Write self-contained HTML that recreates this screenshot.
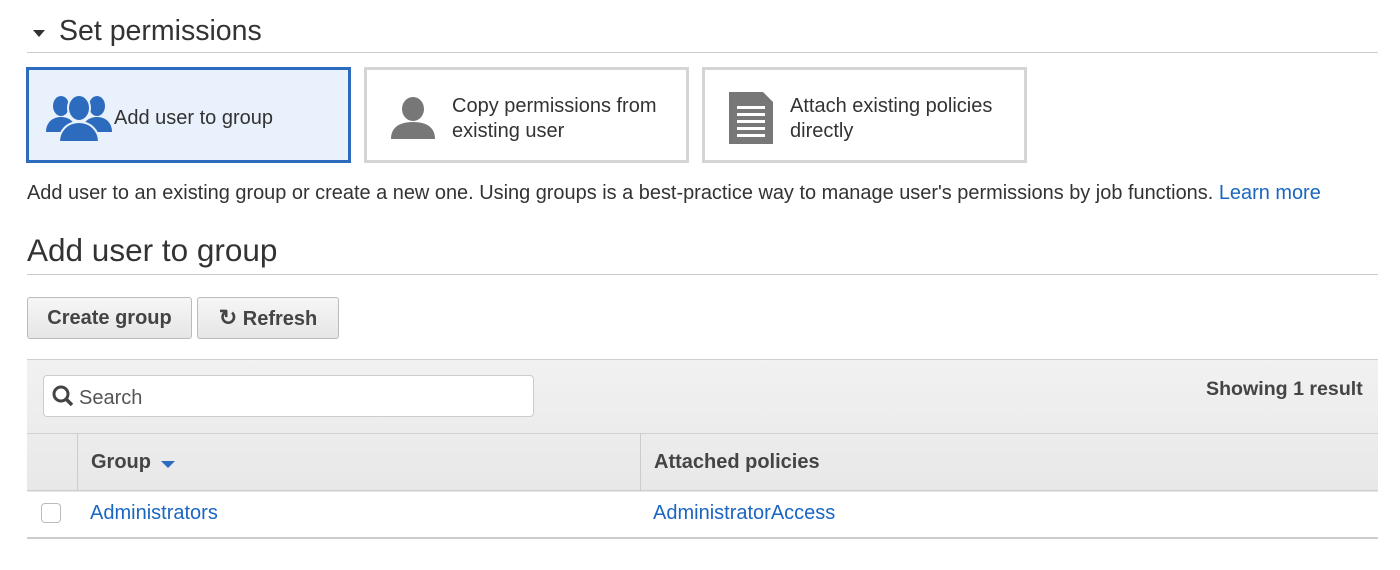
<!DOCTYPE html>
<html><head><style>
body{margin:0;width:1400px;height:570px;background:#fff;font-family:"Liberation Sans",sans-serif;color:#222;position:relative;overflow:hidden}
.a{position:absolute}
.card{position:absolute;top:67px;height:96px;border:3px solid #d5d5d5;box-sizing:border-box;background:#fff;font-size:20px;color:#333}
.btn{position:absolute;top:297px;height:42px;box-sizing:border-box;border:1px solid #bbb;border-radius:3px;background:linear-gradient(#f6f6f6,#e6e6e6);font-weight:bold;font-size:20px;color:#444;line-height:40px;text-align:center}
a{color:#1a66c2;text-decoration:none}
</style></head><body>
<div class="a" style="left:33px;top:30px;width:0;height:0;border-left:6px solid transparent;border-right:6px solid transparent;border-top:7px solid #333"></div>
<div class="a" style="left:59px;top:15px;font-size:28.5px;color:#333">Set permissions</div>
<div class="a" style="left:27px;top:52px;width:1351px;height:1px;background:#ccc"></div>

<div class="card" style="left:26px;width:325px;border-color:#2d6bbf;background:#e8f1fc">
<svg class="a" style="left:17px;top:24px" width="66" height="48" viewBox="0 0 66 48" fill="#2d6bbf">
<ellipse cx="15" cy="12" rx="8" ry="10"/><ellipse cx="51" cy="12" rx="8" ry="10"/><path d="M0 38c0-9 6-15 15-15s15 6 15 15z"/><path d="M36 38c0-9 6-15 15-15s15 6 15 15z"/>
<ellipse cx="33" cy="14" rx="11" ry="13" stroke="#e8f1fc" stroke-width="2"/><path d="M13 48c0-12 9-20 20-20s20 8 20 20z" stroke="#e8f1fc" stroke-width="2"/></svg>
<div class="a" style="left:85px;top:37px">Add user to group</div></div>

<div class="card" style="left:364px;width:325px">
<svg class="a" style="left:24px;top:27px" width="44" height="42" viewBox="0 0 44 42" fill="#777"><ellipse cx="22" cy="12" rx="11" ry="12"/><path d="M0 42c0-12 9-17 22-17s22 5 22 17z"/></svg>
<div class="a" style="left:85px;top:24px;line-height:25px">Copy permissions from<br>existing user</div></div>

<div class="card" style="left:702px;width:325px">
<svg class="a" style="left:24px;top:22px" width="44" height="52" viewBox="0 0 44 52"><path d="M0 0h34l10 10v42H0z" fill="#777"/><g fill="#fff"><rect x="8" y="14" width="28" height="3"/><rect x="8" y="21" width="28" height="3"/><rect x="8" y="28" width="28" height="3"/><rect x="8" y="35" width="28" height="3"/><rect x="8" y="42" width="28" height="3"/></g></svg>
<div class="a" style="left:85px;top:24px;line-height:25px">Attach existing policies<br>directly</div></div>

<div class="a" style="left:27px;top:182px;font-size:19.95px;color:#333">Add user to an existing group or create a new one. Using groups is a best-practice way to manage user's permissions by job functions. <a>Learn more</a></div>
<div class="a" style="left:27px;top:232px;font-size:31.5px;color:#333">Add user to group</div>
<div class="a" style="left:27px;top:274px;width:1351px;height:1px;background:#ccc"></div>

<div class="btn" style="left:27px;width:165px">Create group</div>
<div class="btn" style="left:197px;width:142px"><span style="font-size:22px">&#x21bb;</span> Refresh</div>

<div class="a" style="left:27px;top:359px;width:1351px;height:132px;background:linear-gradient(#f1f1f1,#e8e8e8);border-top:1px solid #d0d0d0"></div>
<div class="a" style="left:43px;top:375px;width:491px;height:42px;box-sizing:border-box;border:1px solid #ccc;border-radius:4px;background:#fff"></div>
<svg class="a" style="left:52px;top:385px" width="22" height="22" viewBox="0 0 22 22"><circle cx="9" cy="9" r="7" fill="none" stroke="#444" stroke-width="3"/><path d="M14 14l6 6" stroke="#444" stroke-width="3.5"/></svg>
<div class="a" style="left:79px;top:387px;font-size:20px;color:#555">Search</div>
<div class="a" style="left:1206px;top:378px;font-size:19.6px;font-weight:bold;color:#444">Showing 1 result</div>
<div class="a" style="left:27px;top:433px;width:1351px;height:1px;background:#d0d0d0"></div>
<div class="a" style="left:77px;top:433px;width:1px;height:57px;background:#ccc"></div>
<div class="a" style="left:640px;top:433px;width:1px;height:57px;background:#ccc"></div>
<div class="a" style="left:91px;top:451px;font-size:20px;font-weight:bold;color:#444">Group</div>
<div class="a" style="left:161px;top:461px;width:0;height:0;border-left:7px solid transparent;border-right:7px solid transparent;border-top:7px solid #2d6bbf"></div>
<div class="a" style="left:654px;top:451px;font-size:20px;font-weight:bold;color:#444">Attached policies</div>
<div class="a" style="left:27px;top:490px;width:1351px;height:1px;background:#ccc"></div>
<div class="a" style="left:41px;top:503px;width:20px;height:20px;box-sizing:border-box;border:1px solid #bbb;border-radius:4px;background:#fff"></div>
<div class="a" style="left:90px;top:502px;font-size:20px"><a>Administrators</a></div>
<div class="a" style="left:653px;top:502px;font-size:20px"><a>AdministratorAccess</a></div>
<div class="a" style="left:27px;top:537px;width:1351px;height:2px;background:#ccc"></div>
</body></html>
